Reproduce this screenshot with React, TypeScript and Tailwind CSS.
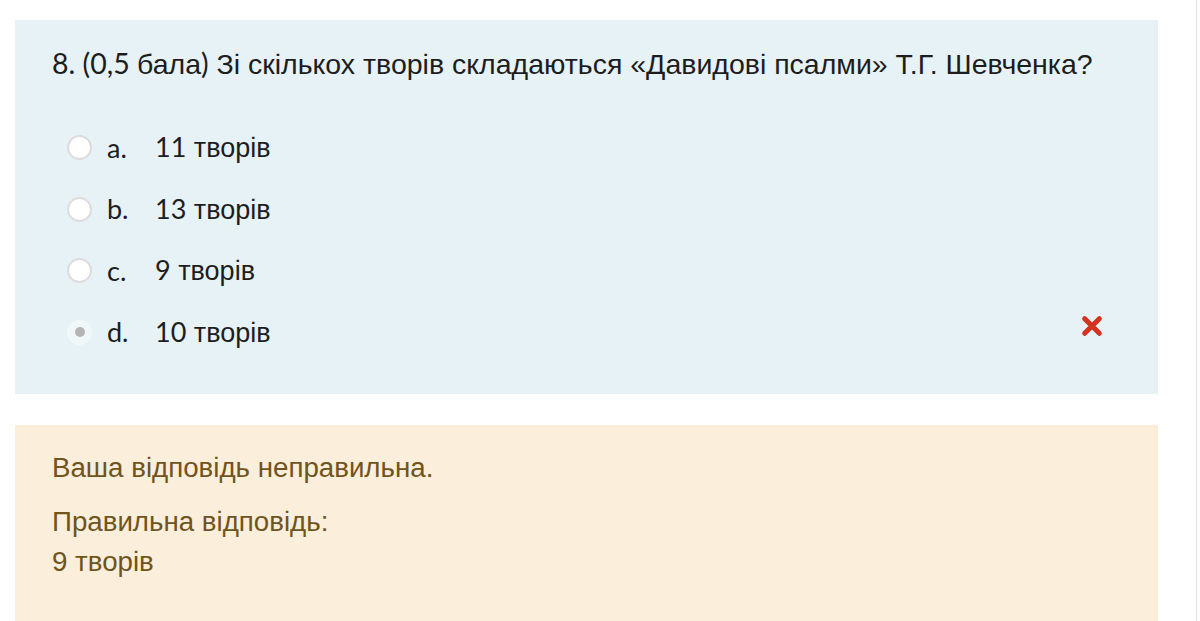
const latin = "font-['Lato','Liberation_Sans',sans-serif]";

function Radio({ checked }: { checked?: boolean }) {
  if (checked) {
    return (
      <span className="flex h-[25px] w-[25px] items-center justify-center rounded-full bg-white/40">
        <span className="h-[10px] w-[10px] rounded-full bg-[#b4b4b4]" />
      </span>
    );
  }
  return <span className="h-[25px] w-[25px] rounded-full border-2 border-[#dcdcdc] bg-white" />;
}

const options = [
  { letter: "a.", num: "11", text: "творів" },
  { letter: "b.", num: "13", text: "творів" },
  { letter: "c.", num: "9", text: "творів" },
  { letter: "d.", num: "10", text: "творів", checked: true, wrong: true },
];

export default function App() {
  return (
    <div className="relative h-[621px] w-[1200px] overflow-hidden bg-white font-['Liberation_Sans',sans-serif] text-[#1d1d1d]">
      <div className="absolute right-[3px] top-0 h-full w-px bg-[#e4e4e4]" />
      <div className="pl-[15px] pr-[42px] pt-[20px]">
        <section className="h-[374px] bg-[#e7f2f6] pl-[37px] pr-[55px] pt-[25px]">
          <h2 className="text-[28.5px] leading-[36px]">
            <span className={latin}>8. (0,5 </span>бала<span className={latin}>)</span> Зі скількох творів складаються «Давидові псалми» Т.Г. Шевченка?
          </h2>
          <ul className="mt-[35px] flex flex-col">
            {options.map((o) => (
              <li key={o.letter} className="flex h-[61.5px] items-center pl-[15px] text-[27px]">
                <Radio checked={o.checked} />
                <span className={`${latin} ml-[15px] w-[48px]`}>{o.letter}</span>
                <span>
                  <span className={latin}>{o.num}</span> {o.text}
                </span>
                {o.wrong && (
                  <svg className="ml-auto mb-[12px] h-[22px] w-[22px]" viewBox="0 0 24 24">
                    <path d="M4 4 L20 20 M20 4 L4 20" stroke="#d2321e" strokeWidth="5.5" strokeLinecap="round" />
                  </svg>
                )}
              </li>
            ))}
          </ul>
        </section>
        <section className="mt-[31px] h-[220px] bg-[#fbeedb] pl-[37px] pt-[28px] text-[27.7px] text-[#6f5420]">
          <p className="leading-[30px]">Ваша відповідь неправильна.</p>
          <p className="mt-[24px] leading-[30px]">Правильна відповідь:</p>
          <p className="mt-[10px] leading-[30px]">9 творів</p>
        </section>
      </div>
    </div>
  );
}
